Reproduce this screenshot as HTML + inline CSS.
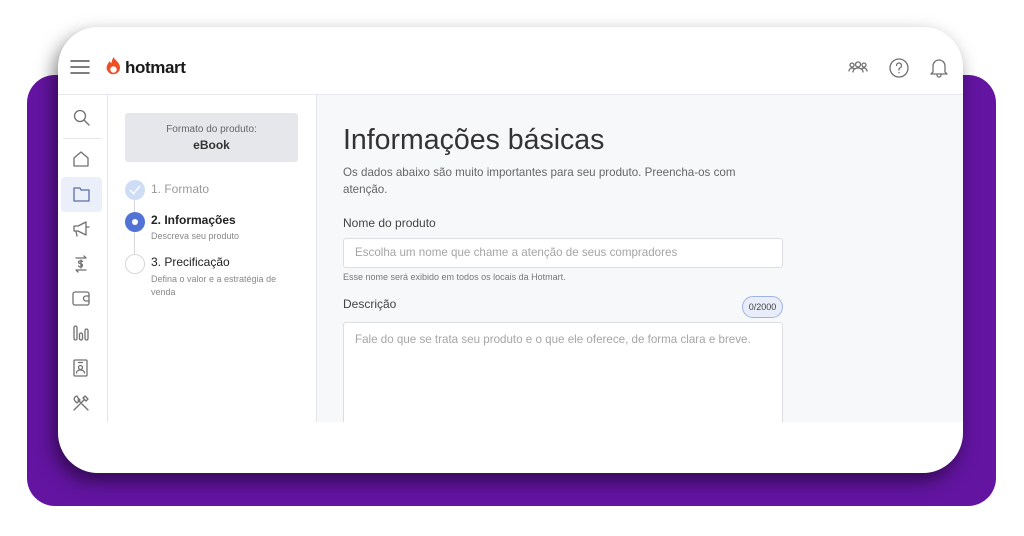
<!DOCTYPE html>
<html><head><meta charset="utf-8"><style>
*{box-sizing:border-box;margin:0;padding:0}
body{width:1024px;height:536px;background:#fff;position:relative;overflow:hidden;font-family:"Liberation Sans",sans-serif;color:#333}
.abs{position:absolute}
.purple{left:27px;top:75px;width:969px;height:431px;background:#6314a1;border-radius:28px}
.card{left:58px;top:27px;width:905px;height:446px;background:#fff;border-radius:40px;box-shadow:-4px 8px 18px rgba(0,0,0,.5);overflow:hidden}
.hdr{left:0;top:0;width:905px;height:68px;border-bottom:1px solid #e6e8ec}
.side{left:0;top:68px;width:50px;height:327px;border-right:1px solid #e3e5e9}
.steps{left:50px;top:68px;width:209px;height:327px;border-right:1px solid #e3e5e9}
.content{left:259px;top:68px;width:646px;height:327px;background:#f7f8fa;overflow:hidden}
svg.i{position:absolute;fill:none;stroke:#707070;stroke-width:1.3;stroke-linecap:round;stroke-linejoin:round}
.t{position:absolute;white-space:nowrap}
</style></head><body>
<div class="abs purple"></div>
<div class="abs card">
 <div class="abs hdr">
  <svg class="i" style="left:12px;top:32px" width="20" height="16" viewBox="0 0 20 16"><path d="M1 2h18M1 8h18M1 14h18" stroke="#555" stroke-width="1.6"/></svg>
  <svg style="position:absolute;left:48px;top:29px" width="15" height="21" viewBox="0 0 15 21"><path d="M7.5 1c1 3 6 5 6.5 10a6.7 6.7 0 1 1-13.4 1c0-3 2-5 3-7 .7 1.5 1.5 2 2 2 0-2 1-4 1.9-6z" fill="#f04e23"/><circle cx="7.5" cy="13.5" r="3.2" fill="#fff"/></svg>
  <div class="t" style="left:67px;top:31px;font-size:17px;font-weight:bold;color:#1a1a1a;letter-spacing:-.4px">hotmart</div>
  <svg class="i" style="left:790px;top:34px" width="20" height="14" viewBox="0 0 20 14"><circle cx="4" cy="4" r="2"/><circle cx="10" cy="3.5" r="2.5"/><circle cx="16" cy="4" r="2"/><path d="M1 10c0-2 2-3 3-3s2 .5 3 1M19 10c0-2-2-3-3-3s-2 .5-3 1M5 11c0-3 3-4 5-4s5 1 5 4"/></svg>
  <svg class="i" style="left:831px;top:31px" width="20" height="20" viewBox="0 0 20 20"><circle cx="10" cy="10" r="9"/><path d="M7.5 7.5a2.5 2.5 0 1 1 3.5 2.3c-.7.3-1 .8-1 1.5v.7M10 14.5v.3"/></svg>
  <svg class="i" style="left:872px;top:31px" width="18" height="20" viewBox="0 0 18 20"><path d="M3 14V8a6 6 0 0 1 12 0v6l2 2H1zM7 17a2 2 0 0 0 4 0"/></svg>
 </div>
 <div class="abs side">
  <svg class="i" style="left:15px;top:14px" width="17" height="17" viewBox="0 0 17 17"><circle cx="7" cy="7" r="5.5"/><path d="M11 11l5 5"/></svg>
  <div class="abs" style="left:5px;top:43px;width:38px;height:1px;background:#e6e8ec"></div>
  <svg class="i" style="left:14px;top:55px" width="18" height="18" viewBox="0 0 18 18"><path d="M2 8l7-6 7 6v8H2z"/></svg>
  <div class="abs" style="left:3px;top:82px;width:41px;height:35px;background:#eaeffa;border-radius:4px"></div>
  <svg class="i" style="left:15px;top:92px;stroke:#5a6ea8" width="17" height="15" viewBox="0 0 17 15"><path d="M1 1h6l1 2h8v11H1z"/></svg>
  <svg class="i" style="left:14px;top:126px" width="18" height="16" viewBox="0 0 18 16"><path d="M2 5h4l8-4v13l-8-4H2zM4 10l1 5M14 6h3"/></svg>
  <svg class="i" style="left:15px;top:160px" width="16" height="18" viewBox="0 0 16 18"><path d="M3 3h10l-2-2M13 15H3l2 2M9.5 6.5c-1-1-4-1-4 .8s4 1 4 3-3 2-4 .8M8 5v8"/></svg>
  <svg class="i" style="left:14px;top:196px" width="18" height="15" viewBox="0 0 18 15"><rect x="1" y="1" width="16" height="13" rx="2"/><path d="M17 5h-3a2.5 2.5 0 0 0 0 5h3"/></svg>
  <svg class="i" style="left:15px;top:230px" width="16" height="16" viewBox="0 0 16 16"><rect x="1" y="1" width="3" height="14" rx="1.5"/><rect x="6.5" y="8" width="3" height="7" rx="1.5"/><rect x="12" y="4" width="3" height="11" rx="1.5"/></svg>
  <svg class="i" style="left:15px;top:264px" width="15" height="18" viewBox="0 0 15 18"><rect x="1" y="1" width="13" height="16" rx="1"/><path d="M5.5 3.5h4"/><circle cx="7.5" cy="8.5" r="2"/><path d="M3.5 14c0-2 2-3 4-3s4 1 4 3"/></svg>
  <svg class="i" style="left:14px;top:299px" width="18" height="18" viewBox="0 0 18 18"><path d="M2 16L12 6M5 2a3 3 0 0 0-2 5l2 2 3-3-2-2zM16 16L6 6M13 2l3 3-2 2-3-3zM12 12l2 2"/></svg>
 </div>
 <div class="abs steps">
  <div class="abs" style="left:17px;top:18px;width:173px;height:49px;background:#e5e7eb;border-radius:3px"></div>
  <div class="t" style="left:17px;top:29px;width:173px;text-align:center;font-size:10px;color:#666">Formato do produto:</div>
  <div class="t" style="left:17px;top:43px;width:173px;text-align:center;font-size:12px;font-weight:bold;color:#333">eBook</div>
  <div class="abs" style="left:26px;top:104px;width:1px;height:56px;background:#d5d7db"></div>
  <div class="abs" style="left:17px;top:85px;width:20px;height:20px;border-radius:50%;background:#cfdcf6"></div>
  <svg style="position:absolute;left:21px;top:90px" width="12" height="10" viewBox="0 0 12 10"><path d="M1 5l3.5 3.5L11 1" fill="none" stroke="#fff" stroke-width="1.5"/></svg>
  <div class="t" style="left:43px;top:87px;font-size:12px;color:#999">1. Formato</div>
  <div class="abs" style="left:17px;top:117px;width:20px;height:20px;border-radius:50%;background:#5273d6"></div>
  <div class="abs" style="left:24px;top:124px;width:6px;height:6px;border-radius:50%;background:#fff"></div>
  <div class="t" style="left:43px;top:118px;font-size:12px;font-weight:bold;color:#222">2. Informações</div>
  <div class="t" style="left:43px;top:136px;font-size:9px;color:#888">Descreva seu produto</div>
  <div class="abs" style="left:17px;top:159px;width:20px;height:20px;border-radius:50%;background:#fff;border:1px solid #d5d7db"></div>
  <div class="t" style="left:43px;top:160px;font-size:12px;color:#222">3. Precificação</div>
  <div class="t" style="left:43px;top:178px;font-size:9px;color:#888;line-height:13px">Defina o valor e a estratégia de<br>venda</div>
 </div>
 <div class="abs content">
  <div class="t" style="left:26px;top:29px;font-size:28.5px;color:#333">Informações básicas</div>
  <div class="t" style="left:26px;top:69px;font-size:11.6px;color:#666;line-height:17px">Os dados abaixo são muito importantes para seu produto. Preencha-os com<br>atenção.</div>
  <div class="t" style="left:26px;top:121px;font-size:12px;color:#444">Nome do produto</div>
  <div class="abs" style="left:26px;top:143px;width:440px;height:30px;background:#fff;border:1px solid #dcdee2;border-radius:3px"></div>
  <div class="t" style="left:38px;top:156px;font-size:11.6px;color:#a5a5a5;line-height:13px;margin-top:-5px">Escolha um nome que chame a atenção de seus compradores</div>
  <div class="t" style="left:26px;top:177px;font-size:9px;color:#777">Esse nome será exibido em todos os locais da Hotmart.</div>
  <div class="t" style="left:26px;top:202px;font-size:12px;color:#444">Descrição</div>
  <div class="abs" style="left:425px;top:201px;width:41px;height:22px;border-radius:11px;background:#e8edf9;border:1px solid #9fb2e3"></div>
  <div class="t" style="left:425px;top:207px;width:41px;text-align:center;font-size:9px;color:#444">0/2000</div>
  <div class="abs" style="left:26px;top:227px;width:440px;height:130px;background:#fff;border:1px solid #dcdee2;border-radius:3px"></div>
  <div class="t" style="left:38px;top:243px;font-size:11.6px;color:#a5a5a5;line-height:13px;margin-top:-5px">Fale do que se trata seu produto e o que ele oferece, de forma clara e breve.</div>
 </div>
</div>
</body></html>
